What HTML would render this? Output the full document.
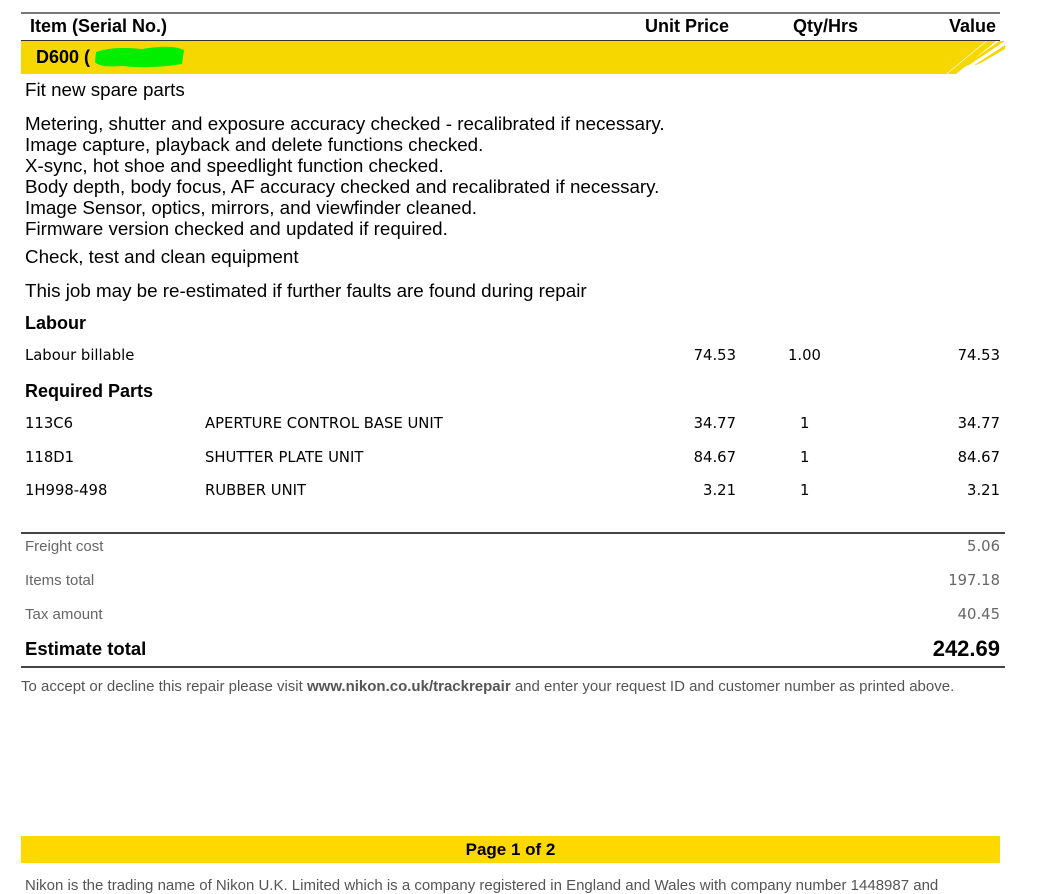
<!DOCTYPE html>
<html><head><meta charset="utf-8"><style>
*{margin:0;padding:0;box-sizing:border-box}
body{width:1043px;height:891px;background:#fff;position:relative;overflow:hidden;font-family:"Liberation Sans",Arial,sans-serif;color:#000}
.a{position:absolute;white-space:nowrap}
.h{font-weight:bold;font-size:18px}
.t{font-size:18.8px}
.v{font-family:"DejaVu Sans",sans-serif;font-size:14.8px}
.g{font-size:15px;color:#666}
.r{text-align:right}
</style></head><body>
<div class="a" style="left:21px;top:12px;width:979px;height:2px;background:#777"></div>
<div class="a h" style="left:30px;top:16px">Item (Serial No.)</div>
<div class="a h" style="left:645px;top:16px">Unit Price</div>
<div class="a h" style="left:793px;top:16px">Qty/Hrs</div>
<div class="a h r" style="left:900px;top:16px;width:96px">Value</div>
<div class="a" style="left:21px;top:40px;width:979px;height:1px;background:#333"></div>
<svg class="a" style="left:21px;top:41px" width="985" height="34">
<polygon points="0,0 965,0 925,33 0,33" fill="#f6d800"/>
<polygon points="966,0 975,0 935,33 926,33" fill="#f6d800"/>
<polygon points="978,0 984,0 948,24 942,26" fill="#f6d800"/>
<polygon points="984,4 984,8 960,22 952,25" fill="#f6d800"/>
</svg>
<div class="a h" style="left:36px;top:47px">D600 (</div>
<svg class="a" style="left:92px;top:44px" width="95" height="26"><path d="M4,8 Q20,2 50,5 Q80,0 92,6 L90,20 Q60,25 30,22 Q8,24 3,18 Z" fill="#00ee00"/></svg>
<div class="a t" style="left:25px;top:79px">Fit new spare parts</div>
<div class="a t" style="left:25px;top:113px;line-height:21px">Metering, shutter and exposure accuracy checked - recalibrated if necessary.<br>Image capture, playback and delete functions checked.<br>X-sync, hot shoe and speedlight function checked.<br>Body depth, body focus, AF accuracy checked and recalibrated if necessary.<br>Image Sensor, optics, mirrors, and viewfinder cleaned.<br>Firmware version checked and updated if required.</div>
<div class="a t" style="left:25px;top:246px">Check, test and clean equipment</div>
<div class="a t" style="left:25px;top:280px">This job may be re-estimated if further faults are found during repair</div>
<div class="a h" style="left:25px;top:313px">Labour</div>
<div class="a v" style="left:25px;top:347px">Labour billable</div>
<div class="a v r" style="left:636px;top:347px;width:100px">74.53</div>
<div class="a v" style="left:788px;top:347px">1.00</div>
<div class="a v r" style="left:900px;top:347px;width:100px">74.53</div>
<div class="a h" style="left:25px;top:381px">Required Parts</div>
<div class="a v" style="left:25px;top:415px">113C6</div>
<div class="a v" style="left:205px;top:415px">APERTURE CONTROL BASE UNIT</div>
<div class="a v r" style="left:636px;top:415px;width:100px">34.77</div>
<div class="a v" style="left:800px;top:415px">1</div>
<div class="a v r" style="left:900px;top:415px;width:100px">34.77</div>
<div class="a v" style="left:25px;top:449px">118D1</div>
<div class="a v" style="left:205px;top:449px">SHUTTER PLATE UNIT</div>
<div class="a v r" style="left:636px;top:449px;width:100px">84.67</div>
<div class="a v" style="left:800px;top:449px">1</div>
<div class="a v r" style="left:900px;top:449px;width:100px">84.67</div>
<div class="a v" style="left:25px;top:482px">1H998-498</div>
<div class="a v" style="left:205px;top:482px">RUBBER UNIT</div>
<div class="a v r" style="left:636px;top:482px;width:100px">3.21</div>
<div class="a v" style="left:800px;top:482px">1</div>
<div class="a v r" style="left:900px;top:482px;width:100px">3.21</div>
<div class="a" style="left:21px;top:532px;width:984px;height:2px;background:#444"></div>
<div class="a g" style="left:25px;top:538px">Freight cost</div>
<div class="a v r" style="left:900px;top:538px;width:100px;color:#666">5.06</div>
<div class="a g" style="left:25px;top:572px">Items total</div>
<div class="a v r" style="left:900px;top:572px;width:100px;color:#666">197.18</div>
<div class="a g" style="left:25px;top:606px">Tax amount</div>
<div class="a v r" style="left:900px;top:606px;width:100px;color:#666">40.45</div>
<div class="a h" style="left:25px;top:638px;font-size:18.5px">Estimate total</div>
<div class="a r" style="left:860px;top:636px;width:140px;font-weight:bold;font-size:22px">242.69</div>
<div class="a" style="left:21px;top:666px;width:984px;height:2px;background:#444"></div>
<div class="a" style="left:21px;top:678px;font-size:15px;color:#555">To accept or decline this repair please visit <b>www.nikon.co.uk/trackrepair</b> and enter your request ID and customer number as printed above.</div>
<div class="a" style="left:21px;top:836px;width:979px;height:27px;background:#ffd800;text-align:center;font-weight:bold;font-size:17px;line-height:27px">Page 1 of 2</div>
<div class="a" style="left:25px;top:877px;font-size:15px;color:#555">Nikon is the trading name of Nikon U.K. Limited which is a company registered in England and Wales with company number 1448987 and</div>
</body></html>
